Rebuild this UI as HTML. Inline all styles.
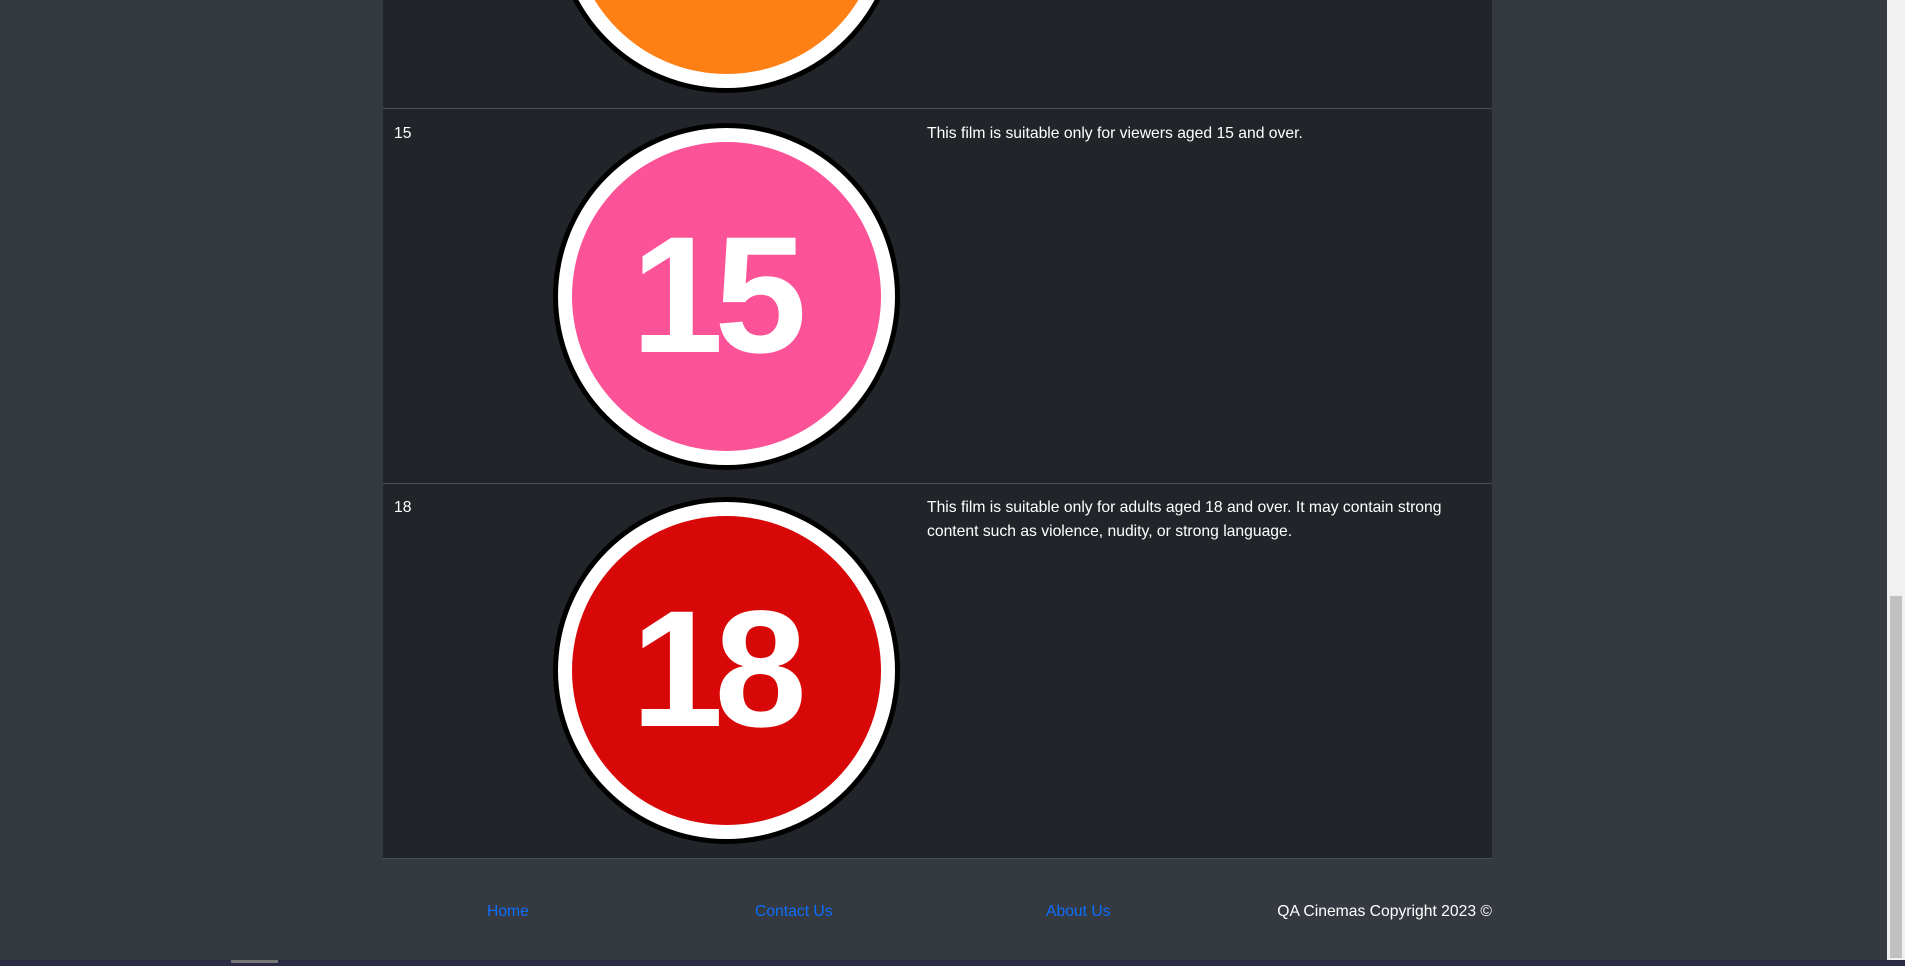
<!DOCTYPE html>
<html><head><meta charset="utf-8"><style>
html,body{margin:0;padding:0;width:1905px;height:966px;overflow:hidden;background:#343a40;font-family:"Liberation Sans",sans-serif;}
.tbl{position:absolute;left:383px;top:0;width:1109px;height:858px;background:#212529;}
.line{position:absolute;left:383px;width:1109px;height:1px;background:#495057;}
.t{position:absolute;color:#fff;font-size:15.7px;line-height:24px;}
.c{position:absolute;width:347px;height:347px;border-radius:50%;background:#000;}
.c .w{position:absolute;left:5px;top:5px;width:337px;height:337px;border-radius:50%;background:#fff;}
.c .i{position:absolute;left:19px;top:19px;width:309px;height:309px;border-radius:50%;}
.c .n{position:absolute;left:-12px;width:347px;text-align:center;color:#fff;font-weight:bold;font-size:166px;letter-spacing:-9px;line-height:1;}
.f{position:absolute;top:900px;font-size:15.7px;line-height:24px;color:#0d6efd;}
</style></head><body>
<div class="tbl"></div>
<div class="line" style="top:108px"></div>
<div class="line" style="top:483px"></div>
<div class="line" style="top:858px"></div>
<div class="c" style="left:553px;top:-254px"><div class="w"></div><div class="i" style="background:#fe7f13"></div></div>
<div class="t" style="left:394px;top:122px">15</div>
<div class="t" style="left:927px;top:122px">This film is suitable only for viewers aged 15 and over.</div>
<div class="c" style="left:553px;top:123px"><div class="w"></div><div class="i" style="background:#fc5297"></div><div class="n" style="top:90px">15</div></div>
<div class="t" style="left:394px;top:496px">18</div>
<div class="t" style="left:927px;top:496px;width:550px">This film is suitable only for adults aged 18 and over. It may contain strong content such as violence, nudity, or strong language.</div>
<div class="c" style="left:553px;top:497px"><div class="w"></div><div class="i" style="background:#d90808"></div><div class="n" style="top:90px">18</div></div>
<div class="f" style="left:487px">Home</div>
<div class="f" style="left:755px">Contact Us</div>
<div class="f" style="left:1046px">About Us</div>
<div class="f" style="right:413px;color:#fff">QA Cinemas Copyright 2023 ©</div>
<div style="position:absolute;left:1887px;top:0;width:18px;height:960px;background:#f1f1f1"></div>
<div style="position:absolute;left:1890px;top:596px;width:12px;height:362px;background:#c1c1c1"></div>
<div style="position:absolute;left:0;top:960px;width:1905px;height:6px;background:#2a2a44"></div>
<div style="position:absolute;left:231px;top:960px;width:47px;height:3px;background:#777"></div>
</body></html>
